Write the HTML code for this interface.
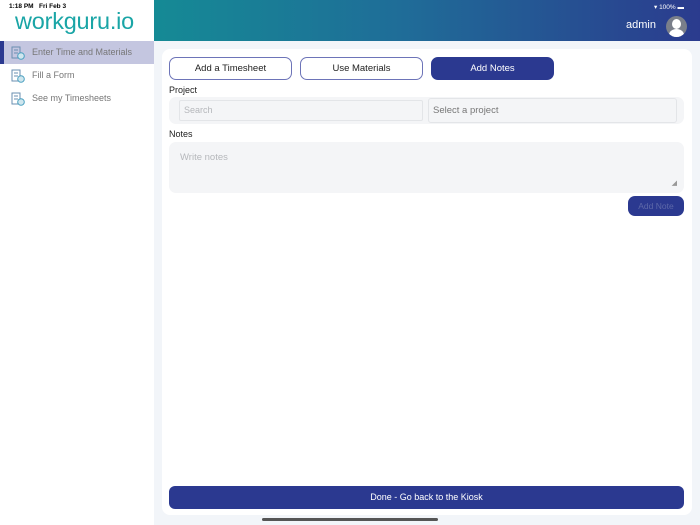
<!DOCTYPE html>
<html><head><meta charset="utf-8"><style>
*{box-sizing:border-box;margin:0;padding:0}
body{width:700px;height:525px;overflow:hidden;font-family:"Liberation Sans",sans-serif;background:#f2f5f9;position:relative}
.side{position:absolute;left:0;top:0;width:154px;height:525px;background:#fff}
.hdr{position:absolute;left:154px;top:0;width:546px;height:41px;background:linear-gradient(90deg,#158a95 0%,#1f6d98 45%,#2b3b8e 100%)}
.t{position:absolute;white-space:nowrap}
.card{position:absolute;left:162px;top:49px;width:530px;height:466px;background:#fff;border-radius:8px}
.btn{position:absolute;top:57px;height:23px;border:1px solid #6d74b8;border-radius:7px;font-size:9.5px;color:#222;text-align:center;line-height:21px;width:123px;background:#fff}
.item{position:absolute;left:0;width:154px;height:23px;font-size:9px;color:#777;line-height:23px;padding-left:32px}
.ic{position:absolute;left:11px;top:5px;width:14px;height:14px}
</style></head><body>
<div class="side">
<div class="t" style="left:9px;top:3px;font-size:6.5px;color:#000;font-weight:bold">1:18 PM&nbsp;&nbsp;&nbsp;Fri Feb 3</div>
<div class="t" style="left:15px;top:8px;font-size:23px;color:#1aa5a6;letter-spacing:-0.2px;transform:scaleX(1.02);transform-origin:left">workguru.io</div>
<div class="item" style="top:41px;background:#c4c6e0"><div style="position:absolute;left:0;top:0;width:4px;height:23px;background:#2b3990"></div>
<svg class="ic" viewBox="0 0 14 14"><rect x="1" y="1" width="8" height="11" fill="none" stroke="#6a8fb0"/><line x1="3" y1="4" x2="7" y2="4" stroke="#6a8fb0"/><line x1="3" y1="7" x2="7" y2="7" stroke="#6a8fb0"/><circle cx="10" cy="10" r="3.3" fill="#cfe6ee" stroke="#4aa0c0"/></svg>Enter Time and Materials</div>
<div class="item" style="top:64px"><svg class="ic" viewBox="0 0 14 14"><rect x="1" y="1" width="8" height="11" fill="none" stroke="#6a8fb0"/><line x1="3" y1="4" x2="7" y2="4" stroke="#6a8fb0"/><line x1="3" y1="7" x2="7" y2="7" stroke="#6a8fb0"/><circle cx="10" cy="10" r="3.3" fill="#cfe6ee" stroke="#4aa0c0"/></svg>Fill a Form</div>
<div class="item" style="top:87px"><svg class="ic" viewBox="0 0 14 14"><rect x="1" y="1" width="8" height="11" fill="none" stroke="#6a8fb0"/><line x1="3" y1="4" x2="7" y2="4" stroke="#6a8fb0"/><line x1="3" y1="7" x2="7" y2="7" stroke="#6a8fb0"/><circle cx="10" cy="10" r="3.3" fill="#cfe6ee" stroke="#4aa0c0"/></svg>See my Timesheets</div>
</div>
<div class="hdr">
<div class="t" style="left:500px;top:3px;font-size:6.5px;color:#fff">▾ 100% ▬</div>
<div class="t" style="left:472px;top:19px;font-size:11px;color:#fff">admin</div>
<div style="position:absolute;left:512px;top:16px;width:21px;height:21px;border-radius:50%;background:#7a7f8a;overflow:hidden"><div style="position:absolute;left:6px;top:3px;width:9px;height:10px;border-radius:50%;background:#fff"></div><div style="position:absolute;left:3px;top:13px;width:15px;height:12px;border-radius:50%;background:#fff"></div></div>
</div>
<div class="card"></div>
<div class="btn" style="left:169px">Add a Timesheet</div>
<div class="btn" style="left:300px">Use Materials</div>
<div class="btn" style="left:431px;background:#2b3990;color:#fff;border-color:#2b3990">Add Notes</div>
<div class="t" style="left:169px;top:85px;font-size:9px;color:#222">Project</div>
<div style="position:absolute;left:169px;top:97px;width:515px;height:27px;background:#f4f5f7;border-radius:7px"></div>
<div style="position:absolute;left:179px;top:100px;width:244px;height:21px;border:1px solid #e3e5e8;border-radius:2px;font-size:9px;color:#b5b7bb;line-height:19px;padding-left:4px">Search</div>
<div style="position:absolute;left:428px;top:98px;width:249px;height:25px;border:1px solid #e3e5e8;border-radius:3px;font-size:9.5px;color:#777;line-height:23px;padding-left:4px">Select a project</div>
<div class="t" style="left:169px;top:129px;font-size:9px;color:#222">Notes</div>
<div style="position:absolute;left:169px;top:142px;width:515px;height:51px;background:#f4f5f7;border-radius:7px;font-size:9.5px;color:#b5b7bb;padding:10px 0 0 11px">Write notes<span style="position:absolute;right:7px;bottom:6px;font-size:7px;color:#999">◢</span></div>
<div style="position:absolute;left:628px;top:196px;width:56px;height:20px;background:#2b3990;border-radius:7px;font-size:8.5px;color:#5d68a8;text-align:center;line-height:20px">Add Note</div>
<div style="position:absolute;left:169px;top:486px;width:515px;height:23px;background:#2b3990;border-radius:6px;font-size:9px;color:#fff;text-align:center;line-height:23px">Done - Go back to the Kiosk</div>
<div style="position:absolute;left:262px;top:518px;width:176px;height:3px;background:#555;border-radius:2px"></div>
</body></html>
